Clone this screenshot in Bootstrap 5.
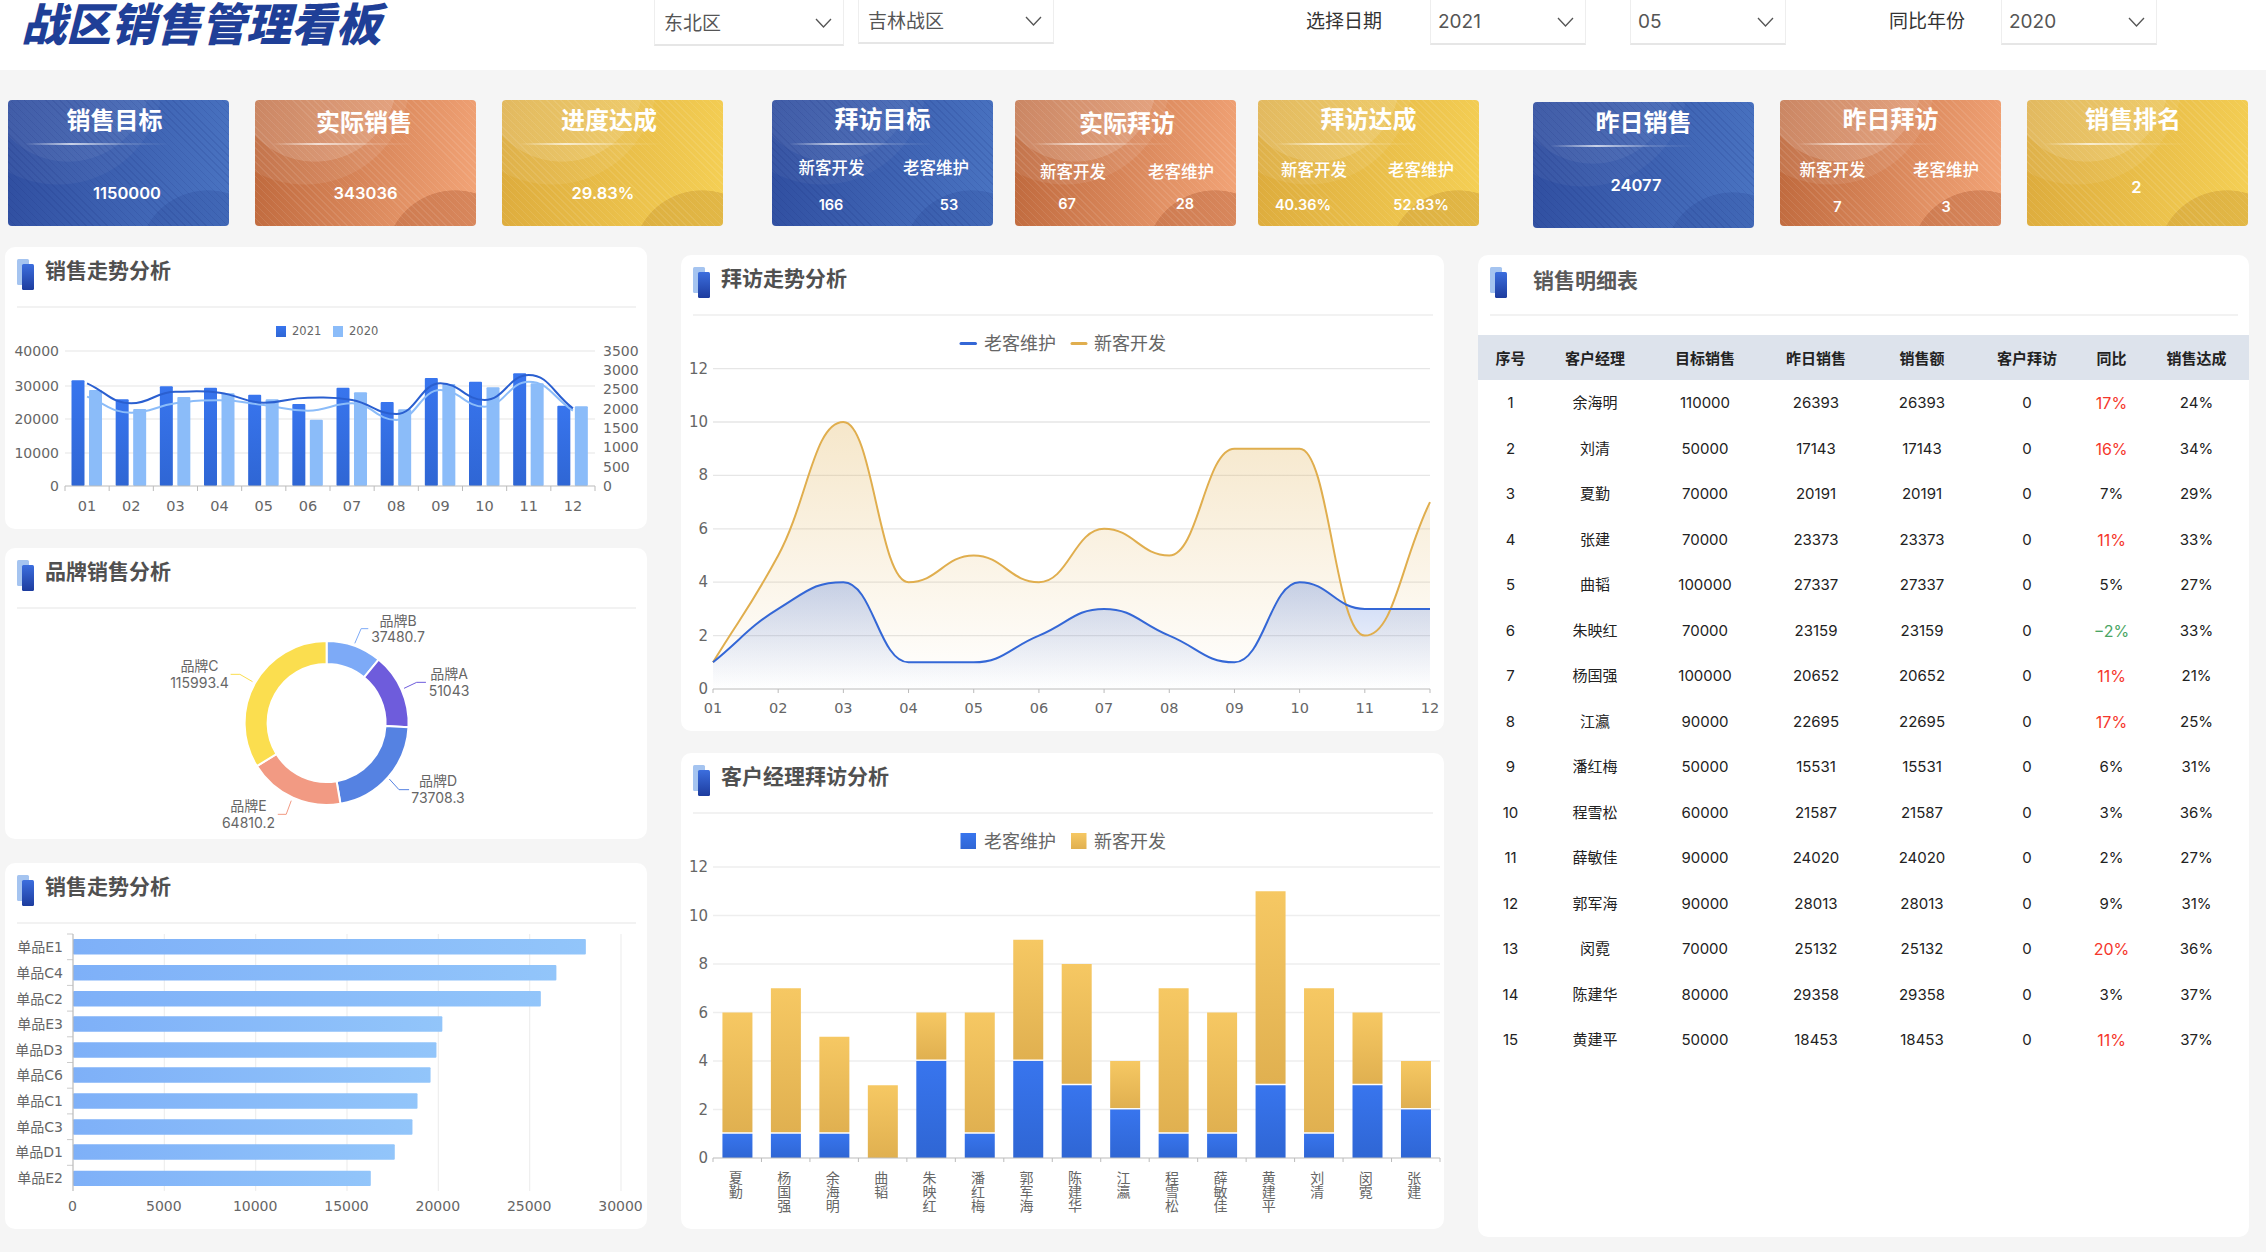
<!DOCTYPE html>
<html lang="zh-CN">
<head>
<meta charset="utf-8">
<title>战区销售管理看板</title>
<link href="https://cdn.jsdelivr.net/npm/bootstrap@5.3.0/dist/css/bootstrap.min.css" rel="stylesheet">
<style>
html,body{width:2266px;height:1252px;overflow:hidden}
body{background:#f5f5f5;font-family:Inter,"Noto Sans CJK SC",sans-serif;color:#222}
.defs-holder{width:0;height:0;overflow:hidden;display:block}
.topbar{height:70px;overflow:hidden}
.board-title{margin:0 0 0 21px;width:633px;font:italic 900 45px/44px "Noto Sans CJK SC",sans-serif;color:#1f3f97;white-space:nowrap}
.pick{height:46px;padding:2px 11px 0 9px;border:1px solid #eee;border-top:0;border-bottom:2px solid #e6e6e6;font-size:19px;line-height:1;color:#555;background:#fff}
.pick svg{width:17px;height:10px;fill:none;stroke:#555;stroke-width:1.3}
.p1{width:190px}.p2{width:196px;margin-left:14px;height:44px;padding-top:0}
.p3{width:156px;margin-left:48px;height:45px;padding-left:7px;padding-top:0}.p4{width:156px;margin-left:44px;height:45px;padding-left:7px;padding-top:0}.p5{width:156px;margin-left:36px;height:45px;padding-left:7px;padding-top:0}
.picklabel{width:76px;height:44px;font-size:19px;color:#333;white-space:nowrap}
.l1{margin-left:252px}.l2{margin-left:103px}
.kpis{height:147px;margin-top:30px}
.kcard{flex:0 0 221px;height:126px;border-radius:4px;overflow:hidden;color:#fff;--a:60px;--b:165px;--c:60px;--d:165px}
.kblue{background:
 repeating-linear-gradient(45deg,rgba(20,40,120,.13) 0 1px,transparent 1px 5px),
 radial-gradient(circle 82px at 60px -20px,rgba(255,255,255,.05) 99%,transparent 100%),
 radial-gradient(circle 105px at 50px -20px,rgba(255,255,255,.04) 99%,transparent 100%),
 radial-gradient(circle 70px at 200px 160px,rgba(40,70,150,.25) 99%,transparent 100%),
 linear-gradient(100deg,#2f4d9f,#4a74c2)}
.korange{background:
 repeating-linear-gradient(45deg,rgba(255,255,255,.09) 0 1px,transparent 1px 5px),
 radial-gradient(circle 82px at 60px -20px,rgba(255,255,255,.14) 99%,transparent 100%),
 radial-gradient(circle 105px at 50px -20px,rgba(255,255,255,.08) 99%,transparent 100%),
 linear-gradient(100deg,#bd673b,#f3a578)}
.kyellow{background:
 repeating-linear-gradient(45deg,rgba(255,255,255,.09) 0 1px,transparent 1px 5px),
 radial-gradient(circle 82px at 60px -20px,rgba(255,255,255,.12) 99%,transparent 100%),
 radial-gradient(circle 105px at 50px -20px,rgba(255,255,255,.07) 99%,transparent 100%),
 linear-gradient(100deg,#dcaa3c,#f5d055)}
.korange .kshade,.kyellow .kshade,.kblue .kshade{display:none}
.korange{background-image:
 repeating-linear-gradient(45deg,rgba(255,255,255,.09) 0 1px,transparent 1px 5px),
 radial-gradient(circle 82px at 60px -20px,rgba(255,255,255,.14) 99%,transparent 100%),
 radial-gradient(circle 105px at 50px -20px,rgba(255,255,255,.08) 99%,transparent 100%),
 radial-gradient(circle 70px at 200px 160px,rgba(180,95,55,.42) 99%,transparent 100%),
 linear-gradient(100deg,#bd673b,#f3a578)}
.kyellow{background-image:
 repeating-linear-gradient(45deg,rgba(255,255,255,.09) 0 1px,transparent 1px 5px),
 radial-gradient(circle 82px at 60px -20px,rgba(255,255,255,.12) 99%,transparent 100%),
 radial-gradient(circle 105px at 50px -20px,rgba(255,255,255,.07) 99%,transparent 100%),
 radial-gradient(circle 70px at 200px 160px,rgba(200,150,50,.42) 99%,transparent 100%),
 linear-gradient(100deg,#dcaa3c,#f5d055)}
.ktop{height:43px;padding-top:var(--tt,1px);padding-left:var(--tl,0);padding-right:var(--tr,0);font:700 24px/36px "Noto Sans CJK SC",sans-serif;text-align:center;white-space:nowrap}
.kline{height:2px;width:145px;margin-left:17px;background:linear-gradient(90deg,transparent,rgba(255,255,255,.7) 32%,rgba(255,255,255,.15) 70%,transparent)}
.knum{font-weight:600;font-size:16.5px;line-height:24px;text-align:center;margin-top:var(--nt,36px);padding-left:var(--nl,0);padding-right:var(--nr,0)}
.ksub{display:grid;grid-template-columns:calc(var(--a)*2) calc((var(--b) - var(--a)*2)*2);text-align:center;white-space:nowrap;font:500 16.5px/24px "Noto Sans CJK SC",sans-serif;margin-top:var(--st,10px)}
.kval{display:grid;grid-template-columns:calc(var(--c)*2) calc((var(--d) - var(--c)*2)*2);text-align:center;white-space:nowrap;font-weight:600;font-size:14.5px;line-height:24px;margin-top:var(--vt,13px)}
.k1{margin-left:8px;--tr:8px;--nt:36px;--nl:17px}
.k2{margin-left:26px;--tt:3px;--tr:3px;--nt:36px}
.k3{margin-left:26px;--tr:7px;--nt:36px;--nr:19px}
.k4{margin-left:49px;--tt:-1px;--a:59.6px;--b:164px;--c:59px;--d:177px;--st:10px;--vt:14px}
.k5{margin-left:22px;--tt:4px;--tl:3px;--a:58px;--b:166px;--c:52px;--d:170px;--st:14px;--vt:9px}
.k6{margin-left:22px;--tt:0px;--a:56px;--b:163px;--c:45px;--d:163px;--st:12px;--vt:12px}
.k7{margin-left:54px;margin-top:2px;--tt:1px;--nt:26px;--nr:15px}
.k8{margin-left:26px;--tt:0px;--a:52.5px;--b:166px;--c:57.5px;--d:166px;--st:12px;--vt:14px}
.k9{margin-left:26px;--nt:30px;--tt:0px;--tr:9px;--nr:2px}
.panel{background:#fff;border:0;border-radius:10px;overflow:hidden}
.phead{height:61px;margin:0 11px 1px 12px;padding-top:12px;border-bottom:2px solid #f2f2f2}
.phead h2{margin:-5px 0 0 11px;font:700 21px/30px "Noto Sans CJK SC",sans-serif;color:#505050;white-space:nowrap}
.picon{width:17px;height:31px;flex:none}
.col-left{width:642px;margin-left:5px}
.col-mid{width:763px;margin-left:34px;padding-top:8px}
.col-right{width:771px;margin-left:34px;padding-top:8px}
.h1a{height:282px;margin-bottom:19px}.h1b{height:291px;margin-bottom:24px}.h1c{height:366px}
.h2a{height:476px;margin-bottom:22px}
.h3a{height:982px}
.phead.tab h2{margin-left:26px;margin-top:-3px;color:#5a5a5a}
.chart{display:block}
.chart text{font-family:"DejaVu Sans","Noto Sans CJK SC",sans-serif;fill:#666}
.chart text.pl{font-family:Inter,"Noto Sans CJK SC",sans-serif}
.sheet{table-layout:fixed;width:771px;margin:18px 0 0;--bs-table-bg:transparent;--bs-table-color:#222}
.sheet th,.sheet td{padding:0;vertical-align:middle;text-align:center;white-space:nowrap}
.sheet th{height:45px;background:#dde3ec;font:700 15px/20px "Noto Sans CJK SC",sans-serif;color:#222}
.sheet td{height:45.5px;padding-top:1px;font-size:15px;line-height:20px;font-weight:400;color:#222}
.sheet td.up{color:#f5372c;font-size:16px}.sheet td.down{color:#4aa564;font-size:16px}
.c1{width:65px}.c2{width:104px}.c3{width:116px}.c4{width:106px}.c5{width:106px}.c6{width:104px}.c7{width:65px}.c8{width:105px}
</style>
</head>
<body>
<svg class="defs-holder" aria-hidden="true">
 <defs>
  <linearGradient id="gFront" x1="0" y1="0" x2="0" y2="1"><stop offset="0" stop-color="#3c6ede"/><stop offset="1" stop-color="#1d3c9e"/></linearGradient>
  <linearGradient id="gB1" x1="0" y1="0" x2="0" y2="1"><stop offset="0" stop-color="#3875ee"/><stop offset="1" stop-color="#2f66d4"/></linearGradient>
  <linearGradient id="gY1" x1="0" y1="0" x2="0" y2="1"><stop offset="0" stop-color="#f6c863"/><stop offset="1" stop-color="#e0b050"/></linearGradient>
  <linearGradient id="gH" x1="0" y1="0" x2="1" y2="0"><stop offset="0" stop-color="#7eb0f8"/><stop offset="1" stop-color="#92c5fa"/></linearGradient>
  <linearGradient id="aY" gradientUnits="userSpaceOnUse" x1="0" y1="420" x2="0" y2="689"><stop offset="0" stop-color="#e0ae4e" stop-opacity=".3"/><stop offset="1" stop-color="#e0ae4e" stop-opacity="0"/></linearGradient>
  <linearGradient id="aB" gradientUnits="userSpaceOnUse" x1="0" y1="582" x2="0" y2="689"><stop offset="0" stop-color="#3467d6" stop-opacity=".27"/><stop offset="1" stop-color="#3467d6" stop-opacity="0"/></linearGradient>
  <symbol id="pIcon" viewBox="0 0 17 31">
   <rect x="0" y="0" width="12" height="26" rx="1.5" fill="#a5c4f0"/>
   <rect x="5" y="5" width="12" height="26" rx="1.5" fill="url(#gFront)"/>
  </symbol>
 </defs>
</svg>

<header class="topbar d-flex align-items-start bg-white">
 <h1 class="board-title">战区销售管理看板</h1>
 <div class="pick p1 d-flex align-items-center justify-content-between"><span>东北区</span><svg viewBox="0 0 17 10"><polyline points="1,1 8.5,9 16,1"/></svg></div>
 <div class="pick p2 d-flex align-items-center justify-content-between"><span>吉林战区</span><svg viewBox="0 0 17 10"><polyline points="1,1 8.5,9 16,1"/></svg></div>
 <span class="picklabel l1 d-flex align-items-center">选择日期</span>
 <div class="pick p3 d-flex align-items-center justify-content-between"><span>2021</span><svg viewBox="0 0 17 10"><polyline points="1,1 8.5,9 16,1"/></svg></div>
 <div class="pick p4 d-flex align-items-center justify-content-between"><span>05</span><svg viewBox="0 0 17 10"><polyline points="1,1 8.5,9 16,1"/></svg></div>
 <span class="picklabel l2 d-flex align-items-center">同比年份</span>
 <div class="pick p5 d-flex align-items-center justify-content-between"><span>2020</span><svg viewBox="0 0 17 10"><polyline points="1,1 8.5,9 16,1"/></svg></div>
</header>

<section class="kpis d-flex align-items-start">
 <div class="kcard kblue k1"><div class="ktop">销售目标</div><div class="kline"></div><div class="knum">1150000</div></div>
 <div class="kcard korange k2"><div class="ktop">实际销售</div><div class="kline"></div><div class="knum">343036</div></div>
 <div class="kcard kyellow k3"><div class="ktop">进度达成</div><div class="kline"></div><div class="knum">29.83%</div></div>
 <div class="kcard kblue k4"><div class="ktop">拜访目标</div><div class="kline"></div><div class="ksub"><span>新客开发</span><span>老客维护</span></div><div class="kval"><span>166</span><span>53</span></div></div>
 <div class="kcard korange k5"><div class="ktop">实际拜访</div><div class="kline"></div><div class="ksub"><span>新客开发</span><span>老客维护</span></div><div class="kval"><span>67</span><span>28</span></div></div>
 <div class="kcard kyellow k6"><div class="ktop">拜访达成</div><div class="kline"></div><div class="ksub"><span>新客开发</span><span>老客维护</span></div><div class="kval"><span>40.36%</span><span>52.83%</span></div></div>
 <div class="kcard kblue k7"><div class="ktop">昨日销售</div><div class="kline"></div><div class="knum">24077</div></div>
 <div class="kcard korange k8"><div class="ktop">昨日拜访</div><div class="kline"></div><div class="ksub"><span>新客开发</span><span>老客维护</span></div><div class="kval"><span>7</span><span>3</span></div></div>
 <div class="kcard kyellow k9"><div class="ktop">销售排名</div><div class="kline"></div><div class="knum">2</div></div>
</section>

<main class="d-flex align-items-start">
 <div class="col-left">
  <div class="card panel h1a">
   <div class="phead d-flex align-items-start"><svg class="picon"><use href="#pIcon"/></svg><h2>销售走势分析</h2></div>
   <svg id="c1" class="chart" width="642" height="220" viewBox="5 309 642 220"></svg>
  </div>
  <div class="card panel h1b">
   <div class="phead d-flex align-items-start"><svg class="picon"><use href="#pIcon"/></svg><h2>品牌销售分析</h2></div>
   <svg id="c2" class="chart" width="642" height="229" viewBox="5 610 642 229"></svg>
  </div>
  <div class="card panel h1c">
   <div class="phead d-flex align-items-start"><svg class="picon"><use href="#pIcon"/></svg><h2>销售走势分析</h2></div>
   <svg id="c3" class="chart" width="642" height="304" viewBox="5 925 642 304"></svg>
  </div>
 </div>
 <div class="col-mid">
  <div class="card panel h2a">
   <div class="phead d-flex align-items-start"><svg class="picon"><use href="#pIcon"/></svg><h2>拜访走势分析</h2></div>
   <svg id="c4" class="chart" width="763" height="414" viewBox="681 317 763 414"></svg>
  </div>
  <div class="card panel h2a mb-0">
   <div class="phead d-flex align-items-start"><svg class="picon"><use href="#pIcon"/></svg><h2>客户经理拜访分析</h2></div>
   <svg id="c5" class="chart" width="763" height="414" viewBox="681 815 763 414"></svg>
  </div>
 </div>
 <div class="col-right">
  <div class="card panel h3a">
   <div class="phead tab d-flex align-items-start"><svg class="picon"><use href="#pIcon"/></svg><h2>销售明细表</h2></div>
   <table class="table table-borderless sheet">
    <colgroup><col class="c1"><col class="c2"><col class="c3"><col class="c4"><col class="c5"><col class="c6"><col class="c7"><col class="c8"></colgroup>
    <thead><tr><th>序号</th><th>客户经理</th><th>目标销售</th><th>昨日销售</th><th>销售额</th><th>客户拜访</th><th>同比</th><th>销售达成</th></tr></thead>
    <tbody>
     <tr><td>1</td><td>余海明</td><td>110000</td><td>26393</td><td>26393</td><td>0</td><td class="up">17%</td><td>24%</td></tr>
     <tr><td>2</td><td>刘清</td><td>50000</td><td>17143</td><td>17143</td><td>0</td><td class="up">16%</td><td>34%</td></tr>
     <tr><td>3</td><td>夏勤</td><td>70000</td><td>20191</td><td>20191</td><td>0</td><td>7%</td><td>29%</td></tr>
     <tr><td>4</td><td>张建</td><td>70000</td><td>23373</td><td>23373</td><td>0</td><td class="up">11%</td><td>33%</td></tr>
     <tr><td>5</td><td>曲韬</td><td>100000</td><td>27337</td><td>27337</td><td>0</td><td>5%</td><td>27%</td></tr>
     <tr><td>6</td><td>朱映红</td><td>70000</td><td>23159</td><td>23159</td><td>0</td><td class="down">−2%</td><td>33%</td></tr>
     <tr><td>7</td><td>杨国强</td><td>100000</td><td>20652</td><td>20652</td><td>0</td><td class="up">11%</td><td>21%</td></tr>
     <tr><td>8</td><td>江瀛</td><td>90000</td><td>22695</td><td>22695</td><td>0</td><td class="up">17%</td><td>25%</td></tr>
     <tr><td>9</td><td>潘红梅</td><td>50000</td><td>15531</td><td>15531</td><td>0</td><td>6%</td><td>31%</td></tr>
     <tr><td>10</td><td>程雪松</td><td>60000</td><td>21587</td><td>21587</td><td>0</td><td>3%</td><td>36%</td></tr>
     <tr><td>11</td><td>薛敏佳</td><td>90000</td><td>24020</td><td>24020</td><td>0</td><td>2%</td><td>27%</td></tr>
     <tr><td>12</td><td>郭军海</td><td>90000</td><td>28013</td><td>28013</td><td>0</td><td>9%</td><td>31%</td></tr>
     <tr><td>13</td><td>闵霓</td><td>70000</td><td>25132</td><td>25132</td><td>0</td><td class="up">20%</td><td>36%</td></tr>
     <tr><td>14</td><td>陈建华</td><td>80000</td><td>29358</td><td>29358</td><td>0</td><td>3%</td><td>37%</td></tr>
     <tr><td>15</td><td>黄建平</td><td>50000</td><td>18453</td><td>18453</td><td>0</td><td class="up">11%</td><td>37%</td></tr>
    </tbody>
   </table>
  </div>
 </div>
</main>

<script src="https://cdn.jsdelivr.net/npm/bootstrap@5.3.0/dist/js/bootstrap.bundle.min.js"></script>
<script>
const NS='http://www.w3.org/2000/svg';
function E(svg,tag,attrs,text){const n=document.createElementNS(NS,tag);for(const k in attrs)n.setAttribute(k,attrs[k]);if(text!==undefined)n.textContent=text;svg.appendChild(n);return n;}
function T(svg,x,y,s,size,anchor,extra){return E(svg,'text',Object.assign({x:x,y:y,'font-size':size,'text-anchor':anchor||'middle','dominant-baseline':'central'},extra||{}),s);}
function L(svg,x1,y1,x2,y2,c,w){E(svg,'line',{x1,y1,x2,y2,stroke:c,'stroke-width':w||1});}
function smooth(p){
 const m=p.map((q,i)=>{if(i==0||i==p.length-1)return (p[Math.min(i+1,p.length-1)][1]-p[Math.max(i-1,0)][1])/(p[Math.min(i+1,p.length-1)][0]-p[Math.max(i-1,0)][0]);
  const a=p[i][1]-p[i-1][1],b=p[i+1][1]-p[i][1];if(a*b<=0)return 0;return (p[i+1][1]-p[i-1][1])/(p[i+1][0]-p[i-1][0]);});
 let d='M'+p[0][0]+' '+p[0][1];
 for(let i=0;i<p.length-1;i++){const h=(p[i+1][0]-p[i][0])*0.45;
  d+=' C'+(p[i][0]+h)+' '+(p[i][1]+m[i]*h)+' '+(p[i+1][0]-h)+' '+(p[i+1][1]-m[i+1]*h)+' '+p[i+1][0]+' '+p[i+1][1];}
 return d;
}
const months=['01','02','03','04','05','06','07','08','09','10','11','12'];
/* chart 1 */
(function(){const s=document.getElementById('c1');
 const zy=v=>240+v/3;
 [[351,'40000'],[386,'30000'],[419,'20000'],[453,'10000'],[486,'0']].forEach(g=>{if(g[1]!='0')L(s,65,g[0],595,g[0],'#eeeeee',1.5);T(s,59,g[0],g[1],14,'end');});
 [[351,'3500'],[370,'3000'],[389,'2500'],[409,'2000'],[428,'1500'],[447,'1000'],[467,'500'],[486,'0']].forEach(g=>T(s,603,g[0],g[1],14,'start'));
 E(s,'rect',{x:276,y:326,width:10,height:11,fill:'url(#gB1)'});T(s,292,331,'2021',11.5,'start');
 E(s,'rect',{x:333,y:326,width:10,height:11,fill:'#8bbcf9'});T(s,349,331,'2020',11.5,'start');
 const a=[421,478,439,443,464,492,443,486,414,425,400,497],b=[450,507,471,460,478,539,457,508,432,442,430,499];
 const w=530/12;
 months.forEach((m,i)=>{const x=65+w*i;
  E(s,'rect',{x:x+6.5,y:zy(a[i]),width:13,height:486-zy(a[i]),fill:'url(#gB1)','rx':1});
  E(s,'rect',{x:x+24,y:zy(b[i]),width:13,height:486-zy(b[i]),fill:'#8bbcf9','rx':1});
  L(s,x,486,x,491,'#bbb',1);T(s,x+w/2,506,m,14.5);});
 L(s,595,486,595,491,'#bbb',1);L(s,65,486,595,486,'#bbb',1.2);
 const cx=months.map((m,i)=>65+w*(i+.5));
 const d1=[430,490,455,458,488,473,480,522,430,480,405,505],d2=[470,518,490,481,495,512,490,540,450,500,425,512];
 E(s,'path',{d:smooth(d2.map((v,i)=>[cx[i],zy(v)])),fill:'none',stroke:'#8bbcf9','stroke-width':2});
 E(s,'path',{d:smooth(d1.map((v,i)=>[cx[i],zy(v)])),fill:'none',stroke:'#2a5fd0','stroke-width':2});
})();
/* chart 2 donut */
(function(){const s=document.getElementById('c2');
 const cx=326.6,cy=723,R=82,r=59,segs=[[37480.7,'#7daaf7'],[51043,'#6e5cdc'],[73708.3,'#5582e2'],[64810.2,'#f29a83'],[115993.4,'#fbde4f']];
 const tot=segs.reduce((t,q)=>t+q[0],0);let ang=0;
 const P=(rad,a)=>[cx+rad*Math.sin(a),cy-rad*Math.cos(a)];
 segs.forEach(q=>{const a2=ang+q[0]/tot*Math.PI*2,la=(a2-ang)>Math.PI?1:0,p1=P(R,ang),p2=P(R,a2),p3=P(r,a2),p4=P(r,ang);
  E(s,'path',{d:`M${p1} A${R} ${R} 0 ${la} 1 ${p2} L${p3} A${r} ${r} 0 ${la} 0 ${p4} Z`,fill:q[1],stroke:'#fff','stroke-width':2});ang=a2;});
 const zx=v=>v/2.376,zy=v=>540+v/3;
 const lab=[['品牌B','37480.7',398,620,636,[[843,310],[858,266],[875,266]],'#7daaf7'],
  ['品牌A','51043',449,673,690,[[960,445],[990,427],[1012,427]],'#6e5cdc'],
  ['品牌D','73708.3',438,780,797,[[925,717],[948,749],[972,749]],'#5582e2'],
  ['品牌E','64810.2',248.5,805,822,[[692,782],[680,823],[660,823]],'#f29a83'],
  ['品牌C','115993.4',199.5,665,682,[[600,425],[570,403],[548,403]],'#fbde4f']];
 lab.forEach(l=>{T(s,l[2],l[3],l[0],14,'middle',{class:'pl'});T(s,l[2],l[4],l[1],14,'middle',{class:'pl'});
  E(s,'polyline',{points:l[5].map(p=>zx(p[0])+','+zy(p[1])).join(' '),fill:'none',stroke:l[6],'stroke-width':1});});
})();
/* chart 3 hbar */
(function(){const s=document.getElementById('c3');
 const x0=73,u=(621-73)/6;
 for(let i=0;i<=6;i++){const x=x0+u*i;if(i)L(s,x,934,x,1191,'#eeeeee',1.2);T(s,x-.5,1206,String(i*5000),14);}
 const names=['单品E1','单品C4','单品C2','单品E3','单品D3','单品C6','单品C1','单品C3','单品D1','单品E2'],
  ends=[1392,1322,1285,1051,1037,1023,992,980,938,881],tops=[237,315,393,469,547,622,700,778,853,932];
 names.forEach((n,i)=>{const y=860+tops[i]/3,h=15.4;
  E(s,'rect',{x:x0,y:y,width:ends[i]/2.376-x0,height:h,fill:'url(#gH)',rx:1});
  T(s,63,y+h/2,n,14,'end');
  const ty=934+25.7*i;L(s,67,ty,73,ty,'#ccc',1);});
 L(s,73,934,73,1191,'#bbb',1.2);
})();
/* chart 4 lines */
(function(){const s=document.getElementById('c4');
 const y0=689,u=26.7,X=i=>713+i*(717/11),Y=v=>y0-v*u;
 [12,10,8,6,4,2,0].forEach(v=>{if(v)L(s,713,Y(v),1430,Y(v),'#e6e6e6',1.3);T(s,708,Y(v),String(v),15,'end');});
 months.forEach((m,i)=>{T(s,X(i),708,m,14.5);L(s,X(i),y0,X(i),y0+4,'#bbb',1);});
 const yv=[1,5,10,4,5,4,6,5,9,9,2,7],bv=[1,3,4,1,1,2,3,2,1,4,3,3];
 const py=smooth(yv.map((v,i)=>[X(i),Y(v)])),pb=smooth(bv.map((v,i)=>[X(i),Y(v)]));
 E(s,'path',{d:py+` L${X(11)} ${y0} L${X(0)} ${y0} Z`,fill:'url(#aY)'});
 E(s,'path',{d:pb+` L${X(11)} ${y0} L${X(0)} ${y0} Z`,fill:'url(#aB)'});
 E(s,'path',{d:py,fill:'none',stroke:'#e0ae4e','stroke-width':2});
 E(s,'path',{d:pb,fill:'none',stroke:'#3467d6','stroke-width':2});
 L(s,713,y0,1430,y0,'#bbb',1.2);
 E(s,'rect',{x:959.5,y:342,width:17.5,height:3,rx:1.5,fill:'#3467d6'});T(s,984,343,'老客维护',18,'start');
 E(s,'rect',{x:1070.5,y:342,width:17,height:3,rx:1.5,fill:'#e0ae4e'});T(s,1094,343,'新客开发',18,'start');
})();
/* chart 5 stacked */
(function(){const s=document.getElementById('c5');
 const y0=1158,u=(1158-867)/12,w=727/15,Y=v=>y0-v*u;
 [12,10,8,6,4,2,0].forEach(v=>{if(v)L(s,713,Y(v),1440,Y(v),'#eeeeee',1.3);T(s,708,Y(v),String(v),15,'end');});
 const d=[['夏勤',1,5],['杨国强',1,6],['余海明',1,4],['曲韬',0,3],['朱映红',4,2],['潘红梅',1,5],['郭军海',4,5],['陈建华',3,5],['江瀛',2,2],['程雪松',1,6],['薛敏佳',1,5],['黄建平',3,8],['刘清',1,6],['闵霓',3,3],['张建',2,2]];
 d.forEach((r,i)=>{const x=713+w*i,bx=x+w/2-14.8,bw=30;
  if(r[1])E(s,'rect',{x:bx,y:Y(r[1]),width:bw,height:r[1]*u,fill:'url(#gB1)'});
  E(s,'rect',{x:bx,y:Y(r[1]+r[2]),width:bw,height:r[2]*u-(r[1]?1.5:0),fill:'url(#gY1)'});
  L(s,x,y0,x,y0+4,'#bbb',1);
  [...r[0]].forEach((c,j)=>T(s,x+w/2-1.5,1177.5+j*14.2,c,14));});
 L(s,1440,y0,1440,y0+4,'#bbb',1);L(s,713,y0,1440,y0,'#bbb',1.2);
 E(s,'rect',{x:960.5,y:833,width:15.5,height:16,fill:'url(#gB1)'});T(s,984,841,'老客维护',18,'start');
 E(s,'rect',{x:1071,y:833,width:15.5,height:16,fill:'url(#gY1)'});T(s,1094,841,'新客开发',18,'start');
})();
</script>
</body>
</html>
